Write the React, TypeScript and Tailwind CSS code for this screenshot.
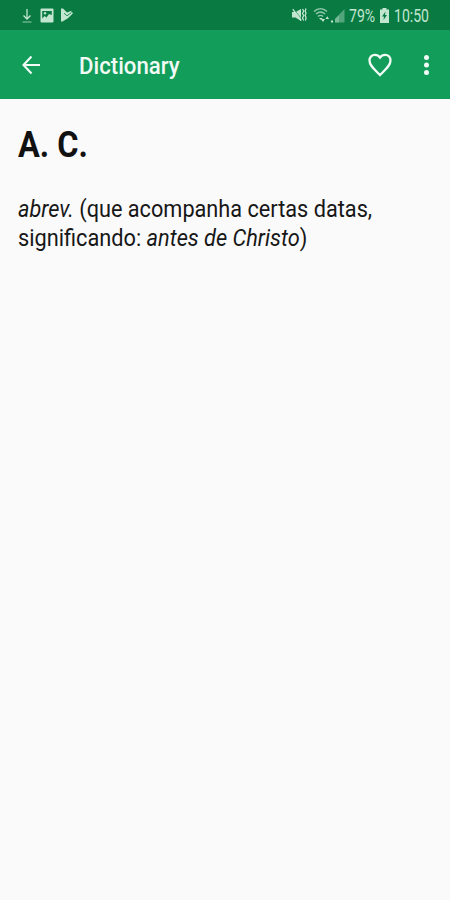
import React from 'react';

function StatusBar() {
  return (
    <div className="flex h-[30px] items-center bg-[#087a42] pl-[21px] pr-[20px] text-[#c3e6d0]">
      <svg className="mt-px h-[16px] w-[12px]" viewBox="0 0 12 16" fill="none" stroke="currentColor">
        <path d="M6 1v10M2.5 7.5 6 11l3.5-3.5" strokeWidth="1.3" />
        <path d="M1.5 14h9" strokeWidth="1.3" opacity="0.6" />
      </svg>
      <svg className="ml-[7px] h-[15px] w-[14px]" viewBox="0 0 14 15" fill="currentColor">
        <path
          fillRule="evenodd"
          d="M1.5.5h11a1 1 0 0 1 1 1v12a1 1 0 0 1-1 1h-11a1 1 0 0 1-1-1v-12a1 1 0 0 1 1-1ZM2.2 3v7.500L4.500 8 6.500 9.500 9 6l2.800 1V3Z"
        />
        <circle cx="5" cy="5.2" r="1.2" />
      </svg>
      <svg className="ml-[7px] h-[14px] w-[12px]" viewBox="0 0 12 14" fill="currentColor">
        <path d="M0 .5h2L6 4.500 10 3 12 5.200 9 8.300 6.500 10.500 1.500 13.500H0Z" />
        <path d="M3 5.200 6 7.800 10.500 4.500" fill="none" stroke="#087a42" strokeWidth="0.8" />
      </svg>

      <svg className="ml-auto h-[16px] w-[15px]" viewBox="0 0 15 16" fill="currentColor">
        <path d="M0 5h3.500L9 2v12L3.500 10.500H0Z" />
        <path d="m2 2 7.500 10" stroke="#087a42" strokeWidth="0.6" />
        <path d="m.8 2.200 8.500 11.500" stroke="currentColor" strokeWidth="1.300" />
        <path d="m10.500 2 1.200 2-1.200 2.500 1.200 2-1.200 2.500 1.200 2.500M14 1.500l-.8 2.500.8 2-.8 2.500.8 2-.5 3" fill="none" stroke="currentColor" strokeWidth="1.300" />
      </svg>
      <svg className="ml-[6px] h-[16px] w-[18px]" viewBox="0 0 18 16" fill="none" stroke="currentColor" strokeWidth="1.400">
        <path d="M1 4.500C5 .8 10 .8 14 4.500M3 7c3-2.600 6-2.600 9 0M5 9.500c1.500-1.500 3.500-1.500 5 0" opacity="0.75" />
        <path d="m6 11 2 2 1.500-2Z" fill="currentColor" stroke="none" />
        <path d="M8 12h4l-2 3ZM12.500 12l1.800-2.800L16 12Z" fill="currentColor" stroke="none" />
      </svg>
      <svg className="h-[15px] w-[14px]" viewBox="0 0 14 15" fill="currentColor">
        <path d="M13.500 1v13.500H4V11Z" opacity="0.4" />
        <path d="M8 7v7.500H4V11Z" opacity="0.35" />
        <path d="M0 12.500h2v2H0Z" />
      </svg>
      <div className="ml-[4px] h-[20px] w-[27px] whitespace-nowrap text-[18px] leading-[22px]">
        <span className="inline-block origin-left scale-x-[0.78]">79%</span>
      </div>
      <svg className="ml-[4px] h-[15px] w-[9px]" viewBox="0 0 9 15" fill="currentColor">
        <path d="M2.500 0h4v1.500H9V15H0V1.500h2.500Z" />
        <path d="M5.500 3.500 2 8.500h2L3.500 12 7 7H5Z" fill="#087a42" />
      </svg>
      <div className="ml-[5px] h-[20px] w-[36px] whitespace-nowrap text-[18px] leading-[22px]">
        <span className="inline-block origin-left scale-x-[0.78]">10:50</span>
      </div>
    </div>
  );
}

function AppBar() {
  return (
    <header className="flex h-[69px] items-center bg-[#129e5a] text-[#f1faf5]">
      <button type="button" aria-label="Back" className="ml-[22px]">
        <svg className="h-[20px] w-[19px]" viewBox="0 0 19 20" fill="none" stroke="currentColor" strokeWidth="2.100">
          <path d="M18 10H2M9.500 1.500 1.500 10l8 8.500" />
        </svg>
      </button>
      <h1 className="ml-[38px] mt-[3px] w-[110px] whitespace-nowrap text-[24px] font-medium leading-[30px]">
        <span className="inline-block origin-left scale-x-[0.925]">Dictionary</span>
      </h1>
      <button type="button" aria-label="Favorite" className="ml-auto mr-[32px]">
        <svg className="h-[24px] w-[24px]" viewBox="0 0 24 24" fill="none" stroke="currentColor" strokeWidth="2.300">
          <path d="M12 22C6 16 1.500 12.500 1.500 7.500 1.500 4 4 1.800 6.800 1.800 9 1.800 11 3 12 4.500c1-1.500 3-2.700 5.200-2.700 2.800 0 5.300 2.200 5.300 5.700 0 5-4.500 8.500-10.500 14.500Z" />
        </svg>
      </button>
      <button type="button" aria-label="More" className="mr-[21px]">
        <svg className="h-[20px] w-[5px]" viewBox="0 0 5 20" fill="currentColor">
          <circle cx="2.500" cy="2.500" r="2.500" />
          <circle cx="2.500" cy="10" r="2.500" />
          <circle cx="2.500" cy="17.500" r="2.500" />
        </svg>
      </button>
    </header>
  );
}

export default function App() {
  return (
    <div className="min-h-screen overflow-hidden bg-[#fafafa] font-['Roboto',sans-serif] text-[#171717]">
      <StatusBar />
      <AppBar />
      <main className="px-[18px] pt-[25px]">
        <h2 className="whitespace-nowrap text-[36px] font-bold leading-[42px] text-[#111]">
          <span className="inline-block origin-left scale-x-[0.9]">A. C.</span>
        </h2>
        <div className="mt-[29px] whitespace-nowrap text-[24px] leading-[29px]">
          <p className="w-max origin-left scale-x-[0.904]">
            <i>abrev.</i> (que acompanha certas datas,
          </p>
          <p className="w-max origin-left scale-x-[0.906]">
            significando: <i>antes de Christo</i>)
          </p>
        </div>
      </main>
    </div>
  );
}
